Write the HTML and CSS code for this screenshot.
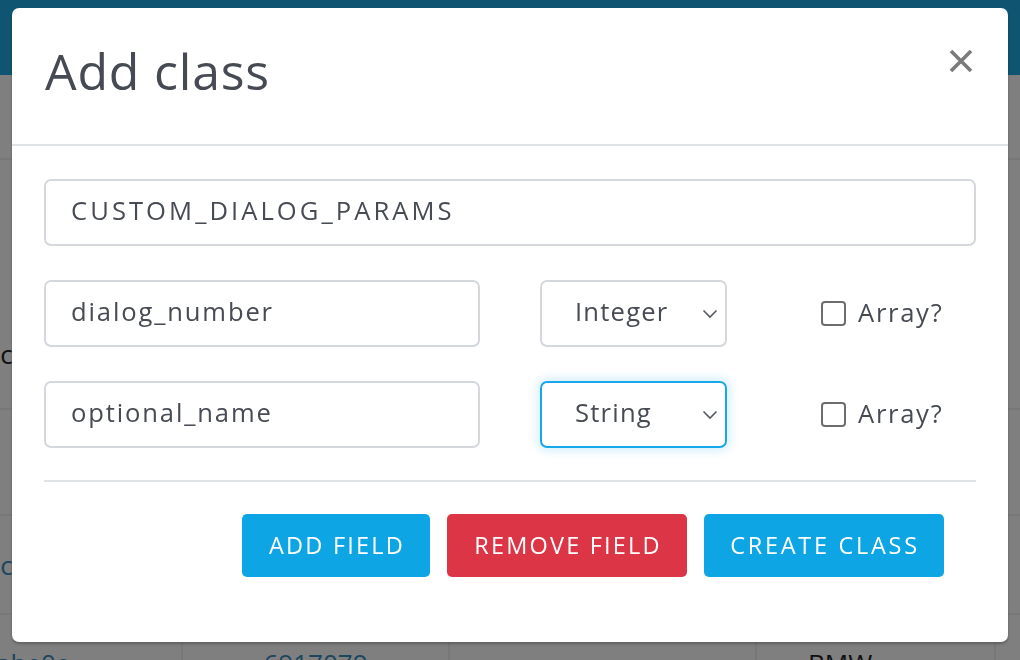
FILE: index.html
```html
<!DOCTYPE html>
<html>
<head>
<meta charset="utf-8">
<link rel="stylesheet" href="styles.css">
</head>
<body>
<div class="page">
  <header class="topbar"></header>
  <div class="table">
    <div class="trow r1"><div class="cell c1"></div><div class="cell c2"></div><div class="cell c3"></div><div class="cell c4"></div><div class="cell c5"></div></div>
    <div class="trow r2"><div class="cell c1"><span class="dark">abc</span></div><div class="cell c2"></div><div class="cell c3"></div><div class="cell c4"></div><div class="cell c5"></div></div>
    <div class="trow r3"><div class="cell c1"></div><div class="cell c2"></div><div class="cell c3"></div><div class="cell c4"></div><div class="cell c5"></div></div>
    <div class="trow r4"><div class="cell c1"><span class="link">abc</span></div><div class="cell c2"></div><div class="cell c3"></div><div class="cell c4"></div><div class="cell c5"></div></div>
    <div class="trow r5"><div class="cell c1"><span class="link">ahe0e</span></div><div class="cell c2 center"><span class="link">6917079</span></div><div class="cell c3"></div><div class="cell c4 bmw"><span class="dark">BMW</span></div><div class="cell c5"></div></div>
  </div>
</div>
<div class="overlay"></div>
<div class="modal">
  <div class="modal-header">
    <h1 class="modal-title">Add class</h1>
    <button class="close" aria-label="Close">
      <svg width="26" height="26" viewBox="0 0 26 26"><path d="M3 3 L23 23 M23 3 L3 23" stroke="#7a7a7a" stroke-width="3.6" stroke-linecap="butt"/></svg>
    </button>
  </div>
  <div class="modal-body">
    <div class="field full caps"><span class="val">CUSTOM_DIALOG_PARAMS</span></div>
    <div class="frow">
      <div class="field name"><span class="val">dialog_number</span></div>
      <div class="select"><span class="val">Integer</span><svg class="chev" width="16" height="10" viewBox="0 0 16 10"><path d="M1.5 1.5 L8 8 L14.5 1.5" fill="none" stroke="#555a60" stroke-width="1.6"/></svg></div>
      <label class="check"><span class="box"></span><span class="lbl">Array?</span></label>
    </div>
    <div class="frow">
      <div class="field name"><span class="val">optional_name</span></div>
      <div class="select focus"><span class="val">String</span><svg class="chev" width="16" height="10" viewBox="0 0 16 10"><path d="M1.5 1.5 L8 8 L14.5 1.5" fill="none" stroke="#555a60" stroke-width="1.6"/></svg></div>
      <label class="check"><span class="box"></span><span class="lbl">Array?</span></label>
    </div>
    <div class="divider"></div>
    <div class="actions">
      <button class="btn blue add">ADD FIELD</button>
      <button class="btn red remove">REMOVE FIELD</button>
      <button class="btn blue create">CREATE CLASS</button>
    </div>
  </div>
</div>
</body>
</html>
```
FILE: styles.css
```css
* { box-sizing: border-box; }
html, body { margin: 0; padding: 0; }
body {
  width: 1020px;
  height: 660px;
  overflow: hidden;
  background: #ffffff;
  font-family: "Open Sans", "Lato", sans-serif;
  color: #474b53;
}
.page { width: 1020px; }
.topbar { height: 75px; background: #1eaae2; }
.table { display: flex; flex-direction: column; }
.trow { display: flex; border-bottom: 2px solid #f0f0f0; }
.r1 { height: 85px; }
.r2 { height: 250px; }
.r3 { height: 106px; }
.r4 { height: 99px; }
.r5 { height: 60px; }
.cell { border-right: 2px solid #f0f0f0; font-size: 26px; display: flex; align-items: center; }
.r5 .cell { align-items: flex-start; padding-top: 30px; }
.c1 { width: 183px; }
.c2 { width: 267px; }
.c3 { width: 307px; }
.c4 { width: 239px; }
.c5 { flex: 1; border-right: none; }
.center { justify-content: center; }
.bmw { padding-left: 51px; }
.r2 .c1 { align-items: flex-end; padding-bottom: 36px; margin-left: -30px; }
.r4 .c1 { margin-left: -30px; }
.r5 .c1 { margin-left: -4px; width: 187px; }
.link { color: #3a8dbf; }
.dark { color: #222; }

.overlay {
  position: fixed;
  inset: 0;
  background: rgba(0, 0, 0, 0.5);
}
.modal {
  position: fixed;
  top: 8px;
  left: 12px;
  width: 996px;
  height: 634px;
  background: #fff;
  border-radius: 7px;
  box-shadow: 0 2px 3px rgba(0,0,0,0.25);
  overflow: hidden;
}
.modal-header {
  height: 138px;
  border-bottom: 2px solid #dfe3e6;
  display: flex;
  align-items: flex-start;
  justify-content: space-between;
  padding: 33px 32px 0 33px;
}
.modal-title {
  margin: 0;
  font-weight: 400;
  font-size: 50px;
  line-height: 60px;
  color: #464a52;
  letter-spacing: 0.8px;
}
.close {
  border: none;
  background: none;
  padding: 0;
  margin-top: 7px;
  margin-right: 2px;
  width: 26px;
  height: 26px;
  display: flex;
}
.modal-body {
  padding: 33px 32px 0 32px;
  display: flex;
  flex-direction: column;
}
.field, .select {
  height: 67px;
  border: 2px solid #d4d8dc;
  border-radius: 7px;
  display: flex;
  align-items: center;
  padding-left: 25px;
  padding-bottom: 4px;
  font-size: 25.6px;
  color: #474b53;
  letter-spacing: 1.85px;
}
.field.caps { letter-spacing: 3.05px; }
.full { width: 932px; }
.frow {
  margin-top: 34px;
  display: grid;
  grid-template-columns: 496px 281px 1fr;
  align-items: center;
}
.name { width: 436px; }
.select {
  width: 187px;
  padding-left: 33px;
  letter-spacing: 1.2px;
  position: relative;
}
.select.focus {
  border-color: #17a8ea;
  box-shadow: 0 0 10px 3px rgba(23, 168, 234, 0.18);
}
.chev { position: absolute; right: 7px; top: 27px; }
.check { display: flex; align-items: center; gap: 12px; font-size: 25.6px; color: #474b53; letter-spacing: 1.7px; padding-bottom: 3px; }
.box {
  width: 25px;
  height: 25px;
  border: 2px solid #6d6d6d;
  border-radius: 4px;
  background: #fff;
  margin-top: 2px;
}
.divider {
  margin-top: 32px;
  height: 2px;
  background: #dfe3e6;
  width: 932px;
}
.actions {
  margin-top: 32px;
  display: flex;
  justify-content: flex-end;
  gap: 17px;
  padding-right: 32px;
}
.btn {
  height: 63px;
  border: none;
  border-radius: 5px;
  color: #fff;
  font-family: "Open Sans", sans-serif;
  font-size: 23.5px;
  font-weight: 500;
  letter-spacing: 2.2px;
  padding: 0 0 2px 2px;
}
.create { letter-spacing: 2.7px; }
.blue { background: #0ea5e4; }
.red { background: #dc3545; }
.add { width: 188px; }
.remove { width: 240px; }
.create { width: 240px; }
```
